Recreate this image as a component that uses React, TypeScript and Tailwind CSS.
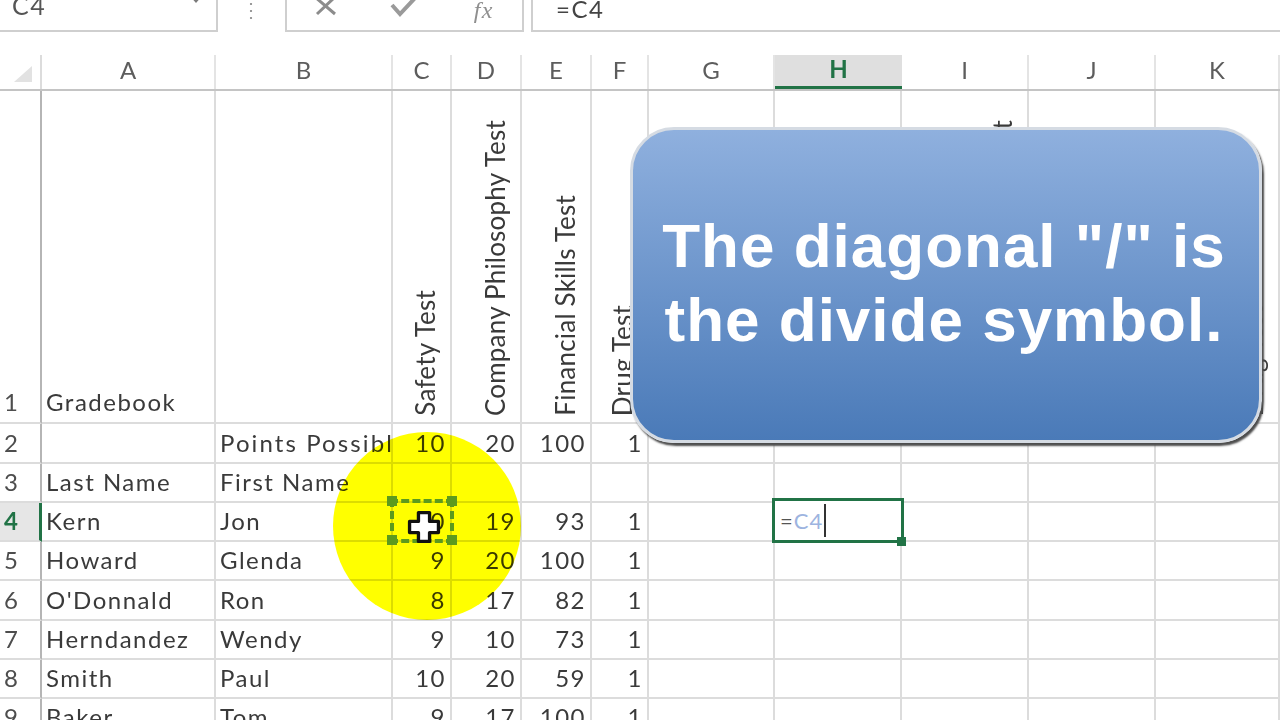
const cols = "grid grid-cols-[42px_174px_177px_59px_70px_70px_57px_126px_127px_127px_127px_124px]";
const line = "border-r-2 border-b-2 border-[#dcdcdc]";
const rows: { n: string; h: string; c: string[] }[] = [
  { n: "2", h: "h-[40px]", c: ["", "Points Possibl", "10", "20", "100", "1"] },
  { n: "3", h: "h-[39px]", c: ["Last Name", "First Name", "", "", "", ""] },
  { n: "4", h: "h-[39px]", c: ["Kern", "Jon", "10", "19", "93", "1"] },
  { n: "5", h: "h-[39px]", c: ["Howard", "Glenda", "9", "20", "100", "1"] },
  { n: "6", h: "h-[40px]", c: ["O'Donnald", "Ron", "8", "17", "82", "1"] },
  { n: "7", h: "h-[39px]", c: ["Herndandez", "Wendy", "9", "10", "73", "1"] },
  { n: "8", h: "h-[39px]", c: ["Smith", "Paul", "10", "20", "59", "1"] },
  { n: "9", h: "h-[39px]", c: ["Baker", "Tom", "9", "17", "100", "1"] },
];
const letters = ["A", "B", "C", "D", "E", "F", "G", "H", "I", "J", "K"];
const vertical: Record<number, string> = { 2: "Safety Test", 3: "Company Philosophy Test", 4: "Financial Skills Test", 5: "Drug Test", 8: "Company Philosophy Test", 10: "Drug Test" };

function Cursor() {
  return (
    <svg width="40" height="40" viewBox="0 0 36 36" className="absolute left-[404px] top-[507px]">
      <path d="M13 5h10v8h8v10h-8v8H13v-8H5V13h8z" fill="#ffffff" stroke="#111111" strokeWidth="3" strokeLinejoin="round" />
    </svg>
  );
}

export default function App() {
  return (
    <div className="relative h-[720px] w-[1280px] overflow-hidden bg-white font-['Lato','Liberation_Sans',sans-serif] text-[24px] tracking-[1.5px] text-[#3a3a3a]">
      <div className="flex h-[55px] items-start bg-white">
        <div className="flex h-[32px] w-[218px] items-center justify-between border-r-2 border-b-2 border-[#cfcfcf] pb-[6px] pl-[12px] pr-[12px] text-[#555555]">
          <span className="-mt-[12px] text-[25px]">C4</span>
          <svg width="16" height="8" viewBox="0 0 16 8" className="-mt-[26px]"><path d="M1 0h14L8 8z" fill="#7a7a7a" /></svg>
        </div>
        <div className="flex h-[30px] w-[67px] items-start justify-center text-[#9a9a9a]">
          <span className="-mt-[6px] text-[20px] leading-[30px]">⋮</span>
        </div>
        <div className="flex h-[32px] w-[239px] items-start justify-between border-x-2 border-b-2 border-[#cfcfcf] pl-[24px] pr-[28px]">
          <svg width="30" height="22" viewBox="0 0 30 22" className="-mt-[4px]"><path d="M4 1l20 17M24 1L6 18" stroke="#8c8c8c" strokeWidth="3" fill="none" /></svg>
          <svg width="30" height="22" viewBox="0 0 30 22" className="-mt-[4px] -ml-[6px]"><path d="M3 9l8 9L27 1" stroke="#9a9a9a" strokeWidth="4" fill="none" /></svg>
          <span className="-mt-[8px] font-['Liberation_Serif',serif] text-[24px] italic text-[#8f8f8f]">fx</span>
        </div>
        <div className="ml-[7px] flex h-[32px] flex-1 items-start border-b-2 border-l-2 border-[#cfcfcf] pl-[23px] text-[#444444]">
          <span className="-mt-[9px] text-[24px]">=C4</span>
        </div>
      </div>

      <div className={`${cols} h-[36px] grid-rows-[34px] border-b-2 border-[#c4c4c4] text-[24px] leading-none tracking-normal text-[#5d5d5d]`}>
        <div className="flex items-end justify-end border-r-2 border-[#dcdcdc] pb-[6px] pr-[6px]">
          <svg width="22" height="18" viewBox="0 0 22 18"><path d="M20 1v16H2z" fill="#e2e2e2" /></svg>
        </div>
        {letters.map((l) => (
          <div key={l} className={l === "H" ? "flex items-center justify-center border-b-[3px] border-[#217346] bg-[#dfdfdf] pb-[3px] font-bold text-[#217346]" : "flex items-center justify-center border-r-2 border-[#e4e4e4] pb-[4px]"}>
            {l}
          </div>
        ))}
      </div>

      <div className={`${cols} h-[333px]`}>
        <div className="flex items-end justify-start border-r-2 border-b-2 border-r-[#b5b5b5] border-b-[#dcdcdc] pb-[2px] pl-[4px] text-[#4d4d4d]">1</div>
        <div className={`${line} flex items-end pb-[2px] pl-[4px]`}>Gradebook</div>
        {letters.slice(1).map((l, i) => (
          <div key={l} className={`${line} flex items-end justify-end overflow-hidden pb-[6px] pr-[5px] text-[26px] tracking-[0.2px]`}>
            {vertical[i + 1] ? <span className="rotate-180 whitespace-nowrap [writing-mode:vertical-rl]">{vertical[i + 1]}</span> : null}
          </div>
        ))}
      </div>

      {rows.map((r) => (
        <div key={r.n} className={`${cols} ${r.h} leading-none`}>
          <div className={r.n === "4" ? "flex items-center justify-start border-r-[3px] border-b-2 border-r-[#217346] border-b-[#dcdcdc] bg-[#e6e6e6] pb-[1px] pl-[4px] font-bold text-[#217346]" : "flex items-center justify-start border-r-2 border-b-2 border-r-[#b5b5b5] border-b-[#dcdcdc] pb-[1px] pl-[4px] text-[#4d4d4d]"}>{r.n}</div>
          {r.c.map((v, i) => (
            <div key={i} className={`${line} flex items-center overflow-hidden whitespace-nowrap pb-[1px] ${i < 2 ? "justify-start pl-[4px]" : "justify-end pr-[4px]"} ${v === "Points Possibl" ? "tracking-[2.1px]" : ""}`}>{v}</div>
          ))}
          <div className={line} />
          <div className={line} />
          <div className={line} />
          <div className={line} />
          <div className={line} />
        </div>
      ))}

      <div className="absolute left-[333px] top-[432px] h-[188px] w-[188px] rounded-full bg-[#ffff00] mix-blend-multiply" />
      <div className="absolute left-[390px] top-[499px] h-[44px] w-[64px] border-[4px] border-dashed border-[#5c9a1e]" />
      <div className="absolute left-[387px] top-[496px] h-[10px] w-[10px] bg-[#5c9a1e]" />
      <div className="absolute left-[447px] top-[496px] h-[10px] w-[10px] bg-[#5c9a1e]" />
      <div className="absolute left-[387px] top-[535px] h-[10px] w-[10px] bg-[#5c9a1e]" />
      <div className="absolute left-[447px] top-[535px] h-[10px] w-[10px] bg-[#5c9a1e]" />
      <Cursor />

      <div className="absolute left-[772px] top-[498px] flex h-[45px] w-[132px] items-center border-[3px] border-[#217346] bg-white pl-[5px] text-[22px] tracking-[1px]">
        <span className="text-[#555555]">=</span>
        <span className="border-r-2 border-[#333333] pr-[1px] text-[#9db4e0]">C4</span>
      </div>
      <div className="absolute left-[897px] top-[537px] h-[9px] w-[9px] bg-[#217346]" />

      <div className="absolute left-[630px] top-[127px] flex h-[316px] w-[632px] flex-col items-center justify-center rounded-[44px] border-[3px] border-[#d5dbe3] bg-gradient-to-b from-[#8fb0de] to-[#4a7ab8] pr-[4px] pb-[4px] font-['Liberation_Sans',sans-serif] text-[62px] font-bold leading-[74px] tracking-[1px] text-white shadow-[2px_3px_2px_#4d4d4d]">
        <div>The diagonal "/" is</div>
        <div>the divide symbol.</div>
      </div>
    </div>
  );
}
